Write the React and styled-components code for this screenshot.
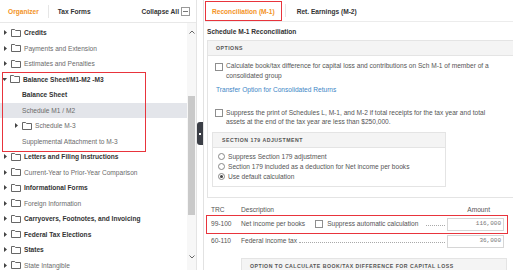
import React from "react";
import styled, { createGlobalStyle } from "styled-components";

const GlobalStyle = createGlobalStyle`
  html, body { margin: 0; padding: 0; background: #fff; overflow: hidden; }
  body {
    font-family: "Liberation Sans", Arial, sans-serif;
    font-size: 6.6px;
    color: #555;
  }
`;

const Page = styled.div`
  display: flex;
  width: 513px;
  height: 270px;
  overflow: hidden;
`;

/* ---------- left organizer ---------- */

const LeftPanel = styled.div`
  width: 196px;
  flex: none;
  display: flex;
  flex-direction: column;
  border-right: 1px solid #e4e4e4;
`;

const LeftHeader = styled.div`
  height: 22px;
  flex: none;
  display: flex;
  align-items: center;
  padding: 0 6px 0 8px;
  border-bottom: 1px solid #e8e8e8;
  font-weight: bold;
`;

const HeaderTab = styled.span`
  color: ${(p) => (p.$active ? "#f39325" : "#333")};
  padding: ${(p) => (p.$active ? "0 9px 0 0" : "0 0 0 9px")};
`;

const HeaderSep = styled.span`
  width: 1px;
  height: 13px;
  background: #e6e6e6;
`;

const Collapse = styled.span`
  margin-left: auto;
  display: flex;
  align-items: center;
  gap: 2px;
  color: #333;
`;

const CollapseBox = styled.span`
  width: 7px;
  height: 7px;
  border: 1px solid #999;
  position: relative;
  &::after {
    content: "";
    position: absolute;
    left: 1px;
    right: 1px;
    top: 3px;
    height: 1px;
    background: #777;
  }
`;

const TreeArea = styled.div`
  flex: 1;
  display: flex;
  overflow: hidden;
`;

const TreeList = styled.div`
  flex: 1;
  padding-top: 2px;
`;

const Group = styled.div`
  position: relative;
  &::after {
    content: "";
    position: absolute;
    left: 2px;
    top: 0;
    width: 142px;
    bottom: -3px;
    border: 1px solid #e8343c;
    pointer-events: none;
  }
`;

const Row = styled.div`
  height: 15.5px;
  display: flex;
  align-items: center;
  padding-left: ${(p) => p.$indent || 3}px;
  background: ${(p) => (p.$selected ? "#e3e5ea" : "transparent")};
  color: ${(p) => (p.$bold ? "#333" : "#6b6b6b")};
  font-weight: ${(p) => (p.$bold ? "bold" : "normal")};
  white-space: nowrap;
`;

const Caret = styled.span`
  width: 5px;
  display: flex;
  justify-content: center;
  margin-right: 3px;
`;

const Folder = styled.span`
  display: flex;
  margin-right: 3px;
`;

const Scrollbar = styled.div`
  width: 9px;
  flex: none;
  display: flex;
  flex-direction: column;
  align-items: center;
  background: #f7f7f7;
`;

const ScrollArrow = styled.div`
  height: ${(p) => p.$h}px;
  display: flex;
  align-items: center;
  justify-content: center;
  margin-bottom: ${(p) => p.$mb || 0}px;
`;

const Thumb = styled.div`
  width: 7px;
  height: 119px;
  margin-top: 55px;
  background: #c9c9c9;
`;

const Spacer = styled.div`
  flex: 1;
`;

const Splitter = styled.div`
  width: 6px;
  flex: none;
  position: relative;
`;

const Handle = styled.div`
  position: absolute;
  left: 0;
  top: 122px;
  width: 6px;
  height: 23px;
  border-radius: 3px 0 0 3px;
  background: #3b3e46;
  display: flex;
  align-items: center;
  justify-content: center;
  &::after {
    content: "";
    width: 2px;
    height: 2px;
    background: #fff;
  }
`;

/* ---------- right panel ---------- */

const RightPanel = styled.div`
  flex: 1;
  border-left: 1px solid #e2e2e2;
  padding-left: 3px;
  overflow: hidden;
`;

const TabBar = styled.div`
  height: 21px;
  display: flex;
  align-items: stretch;
  margin-left: -2px;
  border-bottom: 1px solid #ececec;
  font-weight: bold;
`;

const Tab = styled.div`
  display: flex;
  align-items: center;
  margin: 1px 0 0;
  padding: 0 ${(p) => (p.$active ? 6 : 10)}px;
  height: 18px;
  color: ${(p) => (p.$active ? "#f39325" : "#333")};
  border: 1px solid ${(p) => (p.$active ? "#e8343c" : "transparent")};
`;

const TabSep = styled.span`
  width: 1px;
  margin: 4px 0 4px 3px;
  background: #e6e6e6;
`;

const Title = styled.div`
  margin-top: 5px;
  line-height: 10px;
  font-weight: bold;
  color: #333;
`;

const Box = styled.div`
  width: ${(p) => p.$w}px;
  margin: ${(p) => p.$m || 0};
  border: 1px solid #e4e4e4;
  padding-bottom: ${(p) => p.$pb || 0}px;
`;

const BoxHeader = styled.div`
  height: 14px;
  display: flex;
  align-items: center;
  padding-left: ${(p) => p.$pl || 8}px;
  background: #f4f4f4;
  border-bottom: 1px solid #e4e4e4;
  font-size: 5.2px;
  font-weight: bold;
  letter-spacing: 0.5px;
  color: #555;
`;

const OptionsBody = styled.div`
  padding: 5px 0 0 4px;
`;

const CheckRow = styled.label`
  display: flex;
  gap: 3px;
  padding-left: 3px;
  margin-top: ${(p) => p.$mt || 0}px;
  line-height: 9.5px;
`;

const CheckBox = styled.span`
  width: 6px;
  height: 6px;
  flex: none;
  border: 1px solid #8e8e8e;
  background: #fff;
  margin-top: ${(p) => (p.$inline ? 0 : 1.5)}px;
`;

const CheckText = styled.span`
  width: 275px;
`;

const Link = styled.div`
  margin-top: 4.5px;
  padding-left: 4px;
  line-height: 9.5px;
  color: #3d86c6;
`;

const RadioList = styled.div`
  padding: 4px 0 4px 5px;
`;

const RadioRow = styled.div`
  display: flex;
  align-items: center;
  gap: 3px;
  line-height: 10px;
`;

const Radio = styled.span`
  width: 5px;
  height: 5px;
  border: 1px solid #888;
  border-radius: 50%;
  display: flex;
  align-items: center;
  justify-content: center;
  &::after {
    content: "";
    width: 3px;
    height: 3px;
    border-radius: 50%;
    background: ${(p) => (p.$on ? "#444" : "transparent")};
  }
`;

const Table = styled.div`
  margin: 7px 0 0 -1px;
  width: 302px;
`;

const TRow = styled.div`
  display: flex;
  align-items: center;
  height: ${(p) => p.$h}px;
  padding: 0 3px 0 4px;
  border: 1px solid ${(p) => (p.$marked ? "#e8343c" : "transparent")};
  white-space: nowrap;
  line-height: 8px;
`;

const Trc = styled.span`
  width: 30px;
  flex: none;
`;

const Desc = styled.span`
  flex: none;
`;

const Suppress = styled.span`
  display: flex;
  align-items: center;
  gap: 4px;
  margin-left: 10px;
`;

const Leader = styled.span`
  flex: 1;
  align-self: center;
  margin: 3px 2px 0 ${(p) => p.$ml}px;
  border-bottom: 1px dotted #a9a9a9;
`;

const AmountHead = styled.span`
  margin-left: auto;
  width: 57px;
  text-align: right;
  padding-right: 14px;
  box-sizing: border-box;
`;

const AmountInput = styled.span`
  width: 57px;
  height: 13px;
  box-sizing: border-box;
  border: 1px solid #d6d6d6;
  display: flex;
  align-items: center;
  justify-content: flex-end;
  padding-right: 2px;
  font-family: "Liberation Mono", "Courier New", monospace;
  font-size: 6px;
  color: #777;
`;

const TriangleRight = () => (
  <svg width="3" height="5" viewBox="0 0 3 5">
    <polygon points="0,0 3,2.5 0,5" fill="#444" />
  </svg>
);

const TriangleDown = () => (
  <svg width="5" height="3" viewBox="0 0 5 3">
    <polygon points="0,0 5,0 2.5,3" fill="#444" />
  </svg>
);

const FolderIcon = () => (
  <svg width="10" height="8" viewBox="0 0 10 8">
    <path d="M0.5 0.5H3.6L4.6 1.5H9.5V7.5H0.5Z" fill="none" stroke="#555" strokeWidth="0.9" />
  </svg>
);

const Chevron = ({ up }) => (
  <svg width="6" height="4" viewBox="0 0 6 4">
    <polyline
      points={up ? "0.5,3.5 3,1 5.5,3.5" : "0.5,0.5 3,3 5.5,0.5"}
      fill="none"
      stroke="#666"
      strokeWidth="1"
    />
  </svg>
);

const TreeItem = ({ label, bold, folder = true, open, indent, selected, caret = true }) => (
  <Row $bold={bold} $indent={indent} $selected={selected}>
    {caret && <Caret>{open ? <TriangleDown /> : <TriangleRight />}</Caret>}
    {folder && (
      <Folder>
        <FolderIcon />
      </Folder>
    )}
    {label}
  </Row>
);

export default function App() {
  return (
    <>
      <GlobalStyle />
      <Page>
        <LeftPanel>
          <LeftHeader>
            <HeaderTab $active>Organizer</HeaderTab>
            <HeaderSep />
            <HeaderTab>Tax Forms</HeaderTab>
            <Collapse>
              Collapse All
              <CollapseBox />
            </Collapse>
          </LeftHeader>
          <TreeArea>
            <TreeList>
              <TreeItem label="Credits" bold />
              <TreeItem label="Payments and Extension" />
              <TreeItem label="Estimates and Penalties" />
              <Group>
                <TreeItem label="Balance Sheet/M1-M2 -M3" bold open indent={2} />
                <TreeItem label="Balance Sheet" bold folder={false} caret={false} indent={22} />
                <TreeItem label="Schedule M1 / M2" folder={false} caret={false} indent={22} selected />
                <TreeItem label="Schedule M-3" indent={14} />
                <TreeItem label="Supplemental Attachment to M-3" folder={false} caret={false} indent={22} />
              </Group>
              <TreeItem label="Letters and Filing Instructions" bold />
              <TreeItem label="Current-Year to Prior-Year Comparison" />
              <TreeItem label="Informational Forms" bold />
              <TreeItem label="Foreign Information" />
              <TreeItem label="Carryovers, Footnotes, and Invoicing" bold />
              <TreeItem label="Federal Tax Elections" bold />
              <TreeItem label="States" bold />
              <TreeItem label="State Intangible" />
            </TreeList>
            <Scrollbar>
              <ScrollArrow $h={18}>
                <Chevron up />
              </ScrollArrow>
              <Thumb />
              <Spacer />
              <ScrollArrow $h={16} $mb={5}>
                <Chevron />
              </ScrollArrow>
            </Scrollbar>
          </TreeArea>
        </LeftPanel>

        <Splitter>
          <Handle />
        </Splitter>

        <RightPanel>
          <TabBar>
            <Tab $active>Reconciliation (M-1)</Tab>
            <TabSep />
            <Tab>Ret. Earnings (M-2)</Tab>
          </TabBar>
          <Title>Schedule M-1 Reconciliation</Title>

          <Box $w={330} $m="3px 0 0" $pb={10}>
            <BoxHeader>OPTIONS</BoxHeader>
            <OptionsBody>
              <CheckRow $mt={0}>
                <CheckBox />
                <CheckText>
                  Calculate book/tax difference for capital loss and contributions on Sch M-1 of member of a
                  consolidated group
                </CheckText>
              </CheckRow>
              <Link>Transfer Option for Consolidated Returns</Link>
              <CheckRow $mt={13.5}>
                <CheckBox />
                <CheckText>
                  Suppress the print of Schedules L, M-1, and M-2 if total receipts for the tax year and total
                  assets at the end of the tax year are less than $250,000.
                </CheckText>
              </CheckRow>
              <Box $w={232} $m="5px 0 0">
                <BoxHeader $pl={9}>SECTION 179 ADJUSTMENT</BoxHeader>
                <RadioList>
                  <RadioRow>
                    <Radio />
                    Suppress Section 179 adjustment
                  </RadioRow>
                  <RadioRow>
                    <Radio />
                    Section 179 included as a deduction for Net income per books
                  </RadioRow>
                  <RadioRow>
                    <Radio $on />
                    Use default calculation
                  </RadioRow>
                </RadioList>
              </Box>
            </OptionsBody>
          </Box>

          <Table>
            <TRow $h={8}>
              <Trc>TRC</Trc>
              <Desc>Description</Desc>
              <AmountHead>Amount</AmountHead>
            </TRow>
            <TRow $h={17} $marked>
              <Trc>99-100</Trc>
              <Desc>Net income per books</Desc>
              <Suppress>
                <CheckBox $inline />
                Suppress automatic calculation
              </Suppress>
              <Leader $ml={8} />
              <AmountInput>116,000</AmountInput>
            </TRow>
            <TRow $h={13}>
              <Trc>60-110</Trc>
              <Desc>Federal income tax</Desc>
              <Leader $ml={2} />
              <AmountInput>36,000</AmountInput>
            </TRow>
          </Table>

          <Box $w={264} $m="9px 0 0 34px">
            <BoxHeader $pl={8}>OPTION TO CALCULATE BOOK/TAX DIFFERENCE FOR CAPITAL LOSS</BoxHeader>
          </Box>
        </RightPanel>
      </Page>
    </>
  );
}
